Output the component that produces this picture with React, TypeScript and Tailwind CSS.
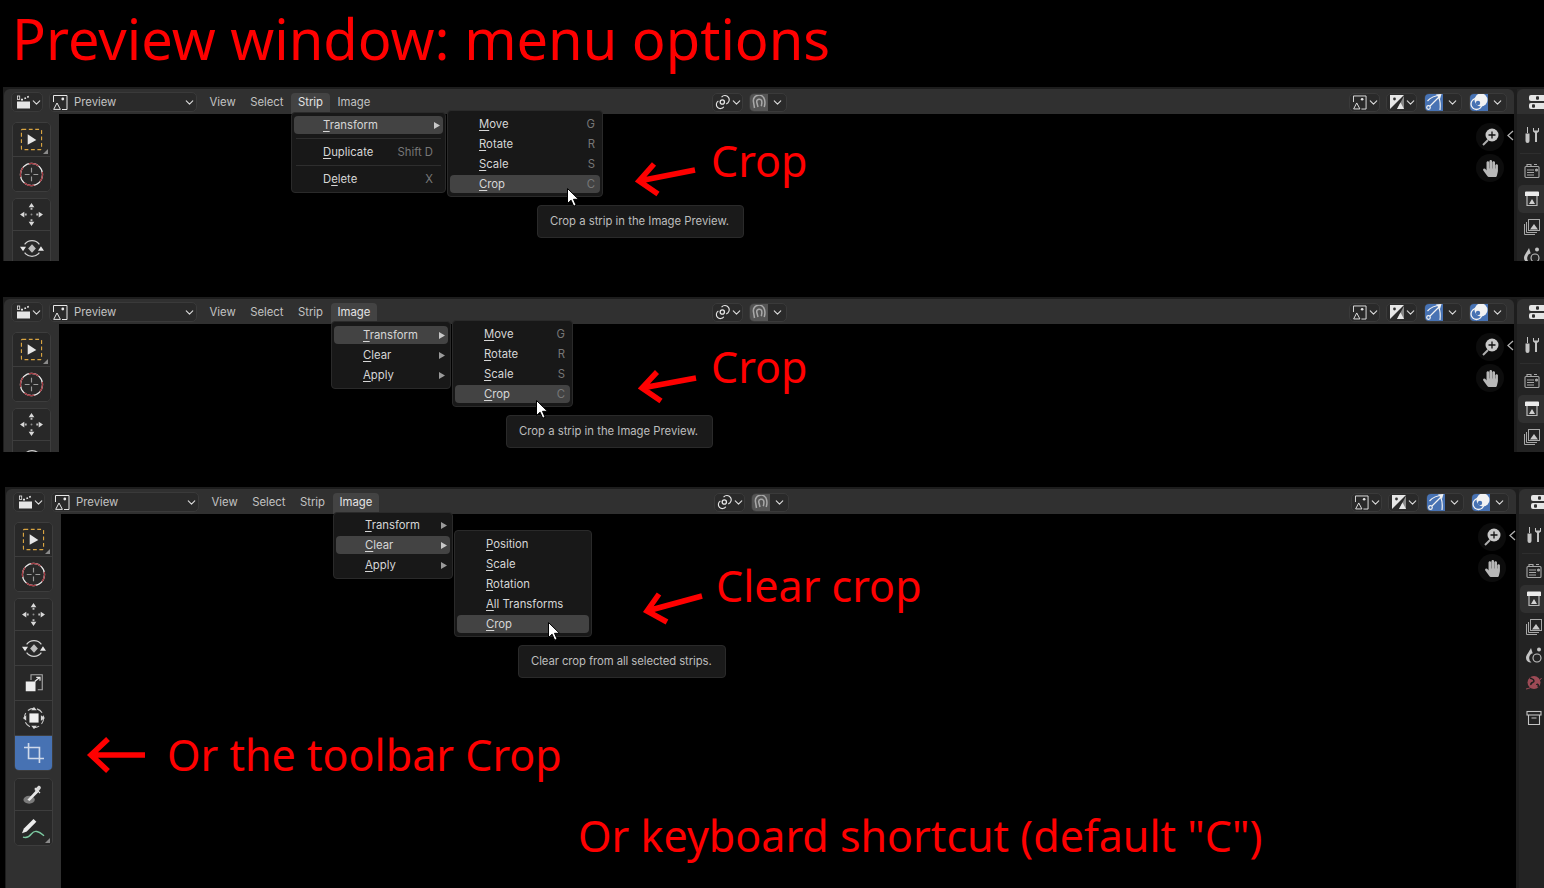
import React from "react";
import { FaHandPaper } from "react-icons/fa";
import { ChevronDown } from "lucide-react";

const W = "#e6e6e6";

function EditorIcon() {
  return (
    <svg width="14" height="14" viewBox="0 0 14 14">
      <rect x="0" y="6.500" width="13" height="7" fill={W} />
      <rect x="0.500" y="1" width="2.200" height="3.500" fill="none" stroke={W} strokeWidth="0.800" />
      <path d="M4 4.600h2M7.400 3.600l1.600-.5M10.200 2.200l1.600-.7" stroke={W} strokeWidth="1.600" fill="none" />
    </svg>
  );
}
function PreviewIcon() {
  return (
    <svg width="15" height="15" viewBox="0 0 15 15" fill="none">
      <path d="M.5 7V.5h13.500v14H9" stroke={W} strokeWidth="1" />
      <path d="M.7 14.400 4 8l3.400 6.400Z" stroke={W} strokeWidth="1" />
      <circle cx="9.800" cy="4" r="1.400" fill={W} />
    </svg>
  );
}
function DisplayIcon() {
  return (
    <svg width="14" height="14" viewBox="0 0 14 14">
      <path d="M0 0h14L0 14Z" fill={W} />
      <path d="M14 14H7L14 1Z" fill="#888" />
      <path d="M7 14 10.500 7.500 14 14Z" fill={W} />
      <circle cx="4.500" cy="4" r="1.400" fill="#333" />
    </svg>
  );
}
function PivotIcon() {
  return (
    <svg width="16" height="16" viewBox="0 0 16 16" fill="none" stroke={W} strokeWidth="1.200">
      <path d="M7 2.700a4.600 4.600 0 1 1 5 7.300" />
      <path d="M9.400 13a4.300 4.300 0 1 1-5.800-6" />
      <circle cx="7.800" cy="8" r="2.300" strokeWidth="1.400" />
    </svg>
  );
}
function MagnetIcon() {
  return (
    <svg width="15" height="15" viewBox="0 0 15 15" fill="none" stroke="#a8a8a8" strokeWidth="1.500">
      <path d="M2.500 13 1.400 6.500A5.600 5.600 0 0 1 12.600 5c.6 2.200.4 4.500-.4 7" />
      <path d="M6 12 4.700 7a2.600 2.600 0 0 1 5-1.200c.4 1.500.2 3.400-.4 5.500" />
    </svg>
  );
}
function GizmoIcon() {
  return (
    <svg width="18" height="18" viewBox="0 0 18 18" fill="none" stroke="#f2f2f2" strokeWidth="1.200">
      <circle cx="3.500" cy="14.500" r="1.800" />
      <path d="M5 13 14 4M2.500 8C6 4 10 2.500 16 2M15 17c.6-5 .2-9-1-12" />
      <path d="M11 1.500 16.500 1 15 6Z" fill="#f2f2f2" stroke="none" />
    </svg>
  );
}
function OverlayIcon() {
  return (
    <svg width="18" height="18" viewBox="0 0 18 18" fill="none">
      <circle cx="6.500" cy="11" r="5.500" stroke="#f2f2f2" strokeWidth="1.300" />
      <circle cx="11" cy="7" r="6.500" fill="#f2f2f2" />
      <circle cx="8" cy="10" r="2.200" fill="#4772b3" />
    </svg>
  );
}
function Caret() {
  return <ChevronDown size={13} strokeWidth={2} color="#dcdcdc" className="shrink-0 -mx-px" />;
}
function SplitButton({ children, active, magnet }: { children: React.ReactNode; active?: boolean; magnet?: boolean }) {
  return (
    <div className="flex h-[19px] w-[38px] shrink-0 rounded-[5px] border border-[#3a3a3a] bg-[#2a2a2a] overflow-hidden">
      <div className={active ? "w-[18px] bg-[#4772b3] flex items-center justify-center" : magnet ? "w-[18px] bg-[#545454] flex items-center justify-center" : "w-[18px] flex items-center justify-center"}>
        {children}
      </div>
      <div className="flex-1 flex items-center justify-center">
        <Caret />
      </div>
    </div>
  );
}
function DropButton({ children, pad = "pl-[3px]" }: { children: React.ReactNode; pad?: string }) {
  return (
    <div className={"flex h-[19px] w-[31px] shrink-0 items-center gap-[1px] rounded-[5px] border border-[#3a3a3a] bg-[#2a2a2a] " + pad}>
      {children}
      <Caret />
    </div>
  );
}
function Header({ active }: { active?: string }) {
  return (
    <div className="h-[25px] shrink-0 bg-[#303030] rounded-tl-[6px] rounded-tr-[6px] flex items-center pl-[7px] text-[11.300px] text-[#c2c2c2]">
      <div className="w-[701px] shrink-0 flex items-center h-full">
        <div className="flex h-[20px] w-[32px] mt-[1px] items-center pl-[5px] rounded-[5px] border border-[#3a3a3a] bg-[#2a2a2a]">
          <EditorIcon />
          <Caret />
        </div>
        <div className="ml-[6px] mt-[1px] flex h-[20px] w-[148px] items-center justify-between pl-[3px] pr-[1px] rounded-[5px] border border-[#3a3a3a] bg-[#2a2a2a]">
          <div className="flex items-center gap-[6px]">
            <PreviewIcon />
            <span>Preview</span>
          </div>
          <Caret />
        </div>
        <div className="ml-[6px] flex items-start gap-[1.500px] h-[21px] self-end">
          {["View", "Select", "Strip", "Image"].map((m) => (
            <div key={m} className={m === active ? "h-full flex items-center pb-[3px] px-[6.500px] rounded-t-[4px] bg-[#434343] text-[#e4e4e4]" : "h-full flex items-center pb-[3px] px-[6.500px]"}>
              {m}
            </div>
          ))}
        </div>
      </div>
      <div className="flex gap-[6px] shrink-0 mt-[1px]">
        <DropButton pad="pl-[2px]"><PivotIcon /></DropButton>
        <SplitButton magnet><MagnetIcon /></SplitButton>
      </div>
      <div className="ml-auto mr-[7px] mt-[1px] flex gap-[6px] items-center shrink-0">
        <DropButton><PreviewIcon /></DropButton>
        <DropButton><DisplayIcon /></DropButton>
        <div className="ml-[1px]"><SplitButton active><GizmoIcon /></SplitButton></div>
        <div className="ml-[1px]"><SplitButton active><OverlayIcon /></SplitButton></div>
      </div>
    </div>
  );
}

const Corner = () => (
  <svg className="absolute right-[2px] bottom-[2px]" width="5" height="5" viewBox="0 0 5 5">
    <path d="M5 0v5H0Z" fill="#8a8a8a" />
  </svg>
);

function SelectTool() {
  return (
    <svg width="23" height="23" viewBox="0 0 24 24" fill="none">
      <rect x="1.500" y="1.500" width="21" height="21" rx="1" stroke="#d9a441" strokeWidth="1.200" strokeDasharray="4 2.700" />
      <path d="M8 6.500 17 12.500 8 17.500Z" fill="#e6e6e6" />
    </svg>
  );
}
function CursorTool() {
  return (
    <svg width="25" height="25" viewBox="0 0 26 26" fill="none">
      <circle cx="13" cy="13" r="11.500" stroke="#ececec" strokeWidth="1.300" />
      <circle cx="13" cy="13" r="11.500" stroke="#a33a42" strokeWidth="1.300" strokeDasharray="11 7" strokeDashoffset="3" />
      <path d="M13 6v5M13 15v5M6 13h5M15 13h5" stroke="#9a9a9a" strokeWidth="1.200" />
    </svg>
  );
}
function MoveTool() {
  return (
    <svg width="23" height="23" viewBox="0 0 24 24" fill="#d8d8d8">
      <path d="M12 0 15 4.500H9ZM12 24l-3-4.500h6ZM0 12l4.500-3v6ZM24 12l-4.500 3V9Z" />
      <path d="M11 5h2v2h-2ZM11 17h2v2h-2ZM5 11h2v2H5ZM17 11h2v2h-2Z" fill="#bdbdbd" />
      <circle cx="12" cy="12" r="1" fill="#8a8a8a" />
    </svg>
  );
}
function RotateTool() {
  return (
    <svg width="24" height="23" viewBox="0 0 26 24" fill="none">
      <path d="M5 7.500a10 10 0 0 1 16 0M5 16.500a10 10 0 0 0 16 0" stroke="#cfcfcf" strokeWidth="1.300" />
      <path d="M0 10h6.500l-3.200 5ZM19.500 14.500h6.500L22.700 9.500Z" fill="#e6e6e6" />
      <path d="m13 7.500 4.200 4.500-4.200 4.500L8.800 12Z" fill="#bdbdbd" />
    </svg>
  );
}
function ScaleTool() {
  return (
    <svg width="18" height="18" viewBox="0 0 24 24" fill="none">
      <path d="M8 8V1h15v20h-6" stroke="#a8a8a8" strokeWidth="1.500" />
      <rect x="1" y="10" width="13" height="13" fill="#ececec" />
      <path d="m13 10 6-5M15 4.500h5V9" stroke="#e6e6e6" strokeWidth="1.600" />
    </svg>
  );
}
function TransformTool() {
  return (
    <svg width="22" height="22" viewBox="0 0 24 24" fill="none">
      <circle cx="12" cy="12" r="10.500" stroke="#c8c8c8" strokeWidth="1.200" strokeDasharray="7 3.500" />
      <rect x="7" y="7" width="10" height="10" fill="#f0f0f0" />
      <path d="M12 0l3 3.500H9ZM12 24l-3-3.500h6ZM0 12l3.500-3v6ZM24 12l-4.500 3V9Z" fill="#d8d8d8" />
    </svg>
  );
}
function CropTool() {
  return (
    <svg width="20" height="20" viewBox="0 0 22 22" fill="none" stroke="#cfd9ea" strokeWidth="1.800">
      <path d="M5 0v17h17M0 5h17v17" />
    </svg>
  );
}
function DropperTool() {
  return (
    <svg width="21" height="21" viewBox="0 0 24 24" fill="none">
      <ellipse cx="7" cy="18" rx="6.500" ry="4.500" fill="#7a7a7a" />
      <path d="M5 18 15 7l2.500 2.500L7.500 19.500Z" fill="#e6e6e6" />
      <path d="M13 6.500 17 2.500c1.500-1.500 4.500 1 3 3l-3.500 4.500Z" fill="#d8d8d8" />
      <path d="m13.500 4.500 6 6" stroke="#e6e6e6" strokeWidth="1.400" />
    </svg>
  );
}
function PencilTool() {
  return (
    <svg width="25" height="23" viewBox="0 0 26 24" fill="none">
      <path d="M1 17 3 12 13 2l3 3L6 15Z" fill="#ececec" />
      <path d="M2 21c3 1 6 .5 9-3.500s7-3 13 2" stroke="#7bc8a0" strokeWidth="1.400" />
    </svg>
  );
}
function ToolButton({ children, active, corner, last, h = "h-[35px]" }: { children: React.ReactNode; active?: boolean; corner?: boolean; last?: boolean; h?: string }) {
  return (
    <div className={(active ? "bg-[#4772b3] " : "bg-[#282828] ") + (last ? "" : "border-b border-[#3d3d3d] ") + "relative flex items-center justify-center " + h}>
      {children}
      {corner && <Corner />}
    </div>
  );
}
const groupCls = "w-[39px] shrink-0 rounded-[5px] border border-[#3d3d3d] overflow-hidden";
function Toolbar() {
  return (
    <div className="w-[55px] shrink-0 bg-[#303030] pl-[8px] pt-[8px] flex flex-col overflow-hidden">
      <div className={groupCls}>
        <ToolButton corner h="h-[34px]"><SelectTool /></ToolButton>
        <ToolButton last h="h-[34px]"><CursorTool /></ToolButton>
      </div>
      <div className={"mt-[6px] " + groupCls}>
        <ToolButton h="h-[32px]"><MoveTool /></ToolButton>
        <ToolButton><RotateTool /></ToolButton>
        <ToolButton><ScaleTool /></ToolButton>
        <ToolButton><TransformTool /></ToolButton>
        <ToolButton active last h="h-[34px]"><CropTool /></ToolButton>
      </div>
      <div className={"mt-[7px] " + groupCls}>
        <ToolButton h="h-[32px]"><DropperTool /></ToolButton>
        <ToolButton corner last h="h-[34px]"><PencilTool /></ToolButton>
      </div>
    </div>
  );
}

function Gizmos() {
  return (
    <>
      <div className="absolute right-0 top-[11px] w-[7px] h-[20px] flex items-center justify-center">
        <svg width="7" height="11" viewBox="0 0 7 11" fill="none" stroke="#b0b0b0" strokeWidth="1.300"><path d="M6 1 1 5.500 6 10" /></svg>
      </div>
      <div className="absolute right-[10px] top-[9px] flex flex-col gap-[3px] items-center">
        <div className="w-[28px] h-[28px] rounded-full bg-[#0c0c0c] flex items-center justify-center">
          <svg width="18" height="18" viewBox="0 0 18 18">
            <path d="M2 17 7 12" stroke="#b0b0b0" strokeWidth="2" />
            <circle cx="11" cy="7" r="6.500" fill="#c8c8c8" />
            <path d="M11 3.500v7M7.500 7h7" stroke="#111" strokeWidth="1.300" />
          </svg>
        </div>
        <div className="w-[28px] h-[28px] rounded-full bg-[#0c0c0c] flex items-center justify-center">
          <FaHandPaper size={17} color="#b8b8b8" />
        </div>
      </div>
    </>
  );
}

const TabIcons = {
  tool: (
    <svg width="16" height="16" viewBox="0 0 16 16" fill="#c4c4c4">
      <path d="M3 0h1v6H3ZM1.500 6.500h4V14a2 2 0 0 1-4 0Z" />
      <path d="M9 1v3.500l2 1.500v9h2V6l2-1.500V1l-1 0v2.500h-4V1Z" />
    </svg>
  ),
  render: (
    <svg width="16" height="16" viewBox="0 0 16 16" fill="none" stroke="#a8a8a8" strokeWidth="1.100">
      <rect x="1" y="3.500" width="14" height="11" rx="1" />
      <path d="M3 3V1.500h4V3M10 1.500h3" />
      <path d="M3 7h7M3 9.500h7M3 12h7" />
      <circle cx="12.500" cy="7" r="1" fill="#a8a8a8" />
    </svg>
  ),
  output: (
    <svg width="16" height="16" viewBox="0 0 16 16">
      <path d="M1 1.500a1 1 0 0 1 1-1h12a1 1 0 0 1 1 1V5H1Z" fill="#ececec" />
      <path d="M3 5v9.500h10V5" fill="none" stroke="#b8b8b8" strokeWidth="1.200" />
      <path d="M5 13 8 8l3 5Z" fill="#d0d0d0" />
    </svg>
  ),
  view: (
    <svg width="16" height="16" viewBox="0 0 16 16" fill="none" stroke="#a8a8a8" strokeWidth="1">
      <rect x="4.500" y="0.500" width="11" height="11" />
      <path d="M2.500 3v10.500H13M.5 5v10.500H11" />
      <path d="M6 10.500 10 5l4 5.500Z" fill="#c8c8c8" stroke="none" />
    </svg>
  ),
  scene: (
    <svg width="16" height="16" viewBox="0 0 16 16">
      <path d="M5 1C3 5 0 8 0 11a4.500 4.500 0 0 0 5.500 4.300 5 5 0 0 1 1.200-9Z" fill="#c4c4c4" />
      <circle cx="13" cy="2.500" r="2" fill="#c4c4c4" />
      <circle cx="11" cy="11" r="4" fill="none" stroke="#c4c4c4" strokeWidth="1.100" />
    </svg>
  ),
  world: (
    <svg width="16" height="16" viewBox="0 0 16 16">
      <circle cx="8" cy="7.500" r="6.500" fill="#9c4a55" />
      <path d="M4 3c2 1 4 1 4 3S4 7 5 10M10 9c2 0 3 1 2 3" stroke="#1f1f1f" strokeWidth="1.500" fill="none" />
      <path d="M0 14c6-1 11-5 15.500-11" stroke="#9c4a55" fill="none" strokeWidth="1" />
    </svg>
  ),
  collection: (
    <svg width="16" height="16" viewBox="0 0 16 16" fill="none" stroke="#c4c4c4" strokeWidth="1.100">
      <rect x="1" y="1.500" width="14" height="3.500" />
      <path d="M2.500 5v9.500h11V5M5.500 8h5" />
    </svg>
  ),
};

function Tab({ icon, active }: { icon: React.ReactNode; active?: boolean }) {
  return (
    <div className={active ? "h-[28px] pl-[6px] flex items-center rounded-l-[5px] bg-[#303030] ml-[1px]" : "h-[28px] pl-[7px] flex items-center"}>
      {icon}
    </div>
  );
}
function Sidebar() {
  return (
    <div className="ml-[3px] flex-1 flex flex-col bg-[#232323] min-w-0">
      <div className="h-[25px] bg-[#303030] rounded-tl-[6px] pl-[12px] flex items-center shrink-0">
        <svg className="shrink-0" width="20" height="16" viewBox="0 0 20 16" fill="#e6e6e6">
          <rect x="0" y="1" width="20" height="6" rx="2" />
          <rect x="0" y="9" width="20" height="6" rx="2" />
          <rect x="7" y="2.200" width="3" height="3.600" rx="1" fill="#303030" />
          <rect x="3" y="10.200" width="3" height="3.600" rx="1" fill="#303030" />
        </svg>
      </div>
      <div className="pt-[7px]">
        <Tab icon={TabIcons.tool} />
        <div className="my-[4px] mx-[3px] h-px bg-[#2e2e2e] -mb-px" />
        <div className="h-[4px]" />
        <Tab icon={TabIcons.render} />
        <Tab icon={TabIcons.output} active />
        <Tab icon={TabIcons.view} />
        <Tab icon={TabIcons.scene} />
        <Tab icon={TabIcons.world} />
        <div className="h-[7px]" />
        <Tab icon={TabIcons.collection} />
      </div>
    </div>
  );
}

function Panel({ className, active, children }: { className: string; active: string; children?: React.ReactNode }) {
  return (
    <div className={"relative flex bg-[#1d1d1d] pt-[2px] pl-[1px] overflow-hidden " + className}>
      <div className="w-[1510px] shrink-0 flex flex-col">
        <Header active={active} />
        <div className="flex flex-1 min-h-0">
          <Toolbar />
          <div className="relative flex-1 bg-black">
            <Gizmos />
          </div>
        </div>
      </div>
      <Sidebar />
      {children}
    </div>
  );
}

function Mn({ t, i = 0 }: { t: string; i?: number }) {
  return (
    <span>
      {t.slice(0, i)}
      <span className="underline decoration-1 underline-offset-[2px]">{t[i]}</span>
      {t.slice(i + 1)}
    </span>
  );
}
function Row({ t, i, hl, sc, sub, scPad = "pr-[5px]", indent = "pl-[29px]" }: { t: string; i?: number; hl?: boolean; sc?: string; sub?: boolean; scPad?: string; indent?: string }) {
  return (
    <div className={(hl ? "bg-[#434343] rounded-[4px] " : "") + "h-[18px] my-[1px] shrink-0 flex items-center justify-between text-[11.300px] text-[#d6d6d6] " + indent}>
      <Mn t={t} i={i} />
      {sc && <span className={"text-[#777777] " + scPad}>{sc}</span>}
      {sub && (
        <svg className="mr-[3px]" width="6" height="7" viewBox="0 0 6 7"><path d="M0 0 6 3.500 0 7Z" fill={hl ? "#c8c8c8" : "#9a9a9a"} /></svg>
      )}
    </div>
  );
}
const Sep = () => <div className="h-[7px] shrink-0 flex items-center px-[2px]"><div className="h-px w-full bg-[#2e2e2e]" /></div>;

function Menu({ className, children }: { className: string; children: React.ReactNode }) {
  return (
    <div className={"absolute flex flex-col rounded-[4px] border border-[#2a2a2a] bg-[#181818] px-[2px] " + className}>
      {children}
    </div>
  );
}
function Tooltip({ className, children }: { className: string; children: React.ReactNode }) {
  return (
    <div className={"absolute h-[33px] flex items-center pl-[12px] rounded-[4px] border border-[#2a2a2a] bg-[#1a1a1a] text-[11.300px] text-[#bdbdbd] whitespace-nowrap " + className}>
      {children}
    </div>
  );
}
function Cursor({ className }: { className: string }) {
  return (
    <svg className={"absolute " + className} width="13" height="19" viewBox="0 0 13 19">
      <path d="M.5.5v15l3.600-3.300 2.600 6 2.400-1-2.600-5.900h5Z" fill="#fff" stroke="#000" strokeWidth="1" />
    </svg>
  );
}
function RedLabel({ className, children }: { className: string; children: React.ReactNode }) {
  return (
    <div className={"absolute whitespace-nowrap leading-none text-[43px] text-[#ff0000] font-['Noto_Sans',sans-serif] " + className}>
      {children}
    </div>
  );
}
function RedArrow({ className, w, h, d }: { className: string; w: number; h: number; d: string }) {
  return (
    <svg className={"absolute " + className} width={w} height={h} viewBox={`0 0 ${w} ${h}`} fill="none" stroke="#ff0000" strokeWidth="5.500">
      <path d={d} />
    </svg>
  );
}

export default function App() {
  return (
    <div className="w-[1544px] h-[888px] bg-black overflow-hidden font-['Inter',sans-serif]">
      <h1 className="h-[87px] pl-[12px] pt-[5px] text-[56px] leading-[66px] text-[#ff0000] font-['Noto_Sans',sans-serif] font-normal whitespace-nowrap">
        Preview window: menu options
      </h1>

      <Panel className="ml-[3px] h-[174px]" active="Strip">
        <Menu className="left-[288px] top-[25px] w-[155px] pt-[2px]">
          <Row t="Transform" hl sub />
          <Sep />
          <Row t="Duplicate" sc="Shift D" scPad="pr-[10px]" />
          <Sep />
          <Row t="Delete" i={1} sc="X" scPad="pr-[10px]" />
          <div className="h-[3px]" />
        </Menu>
        <Menu className="left-[444px] top-[23px] w-[156px] pt-[3px] pb-[2px]">
          <Row t="Move" sc="G" />
          <Row t="Rotate" sc="R" />
          <Row t="Scale" sc="S" />
          <Row t="Crop" sc="C" hl />
        </Menu>
        <Tooltip className="left-[534px] top-[118px] w-[207px]">Crop a strip in the Image Preview.</Tooltip>
        <Cursor className="left-[564px] top-[101px]" />
        <RedArrow className="left-[627px] top-[71px]" w={70} h={42} d="M65 12 9 23M24 6 9 23 28 36" />
        <RedLabel className="left-[708px] top-[52px]">Crop</RedLabel>
      </Panel>

      <Panel className="ml-[3px] mt-[36px] h-[155px]" active="Image">
        <Menu className="left-[328px] top-[24px] w-[120px] pt-[3px] pb-[3px]">
          <Row t="Transform" hl sub />
          <Row t="Clear" sub />
          <Row t="Apply" sub />
        </Menu>
        <Menu className="left-[449px] top-[23px] w-[121px] pt-[3px] pb-[2px]">
          <Row t="Move" sc="G" />
          <Row t="Rotate" sc="R" />
          <Row t="Scale" sc="S" />
          <Row t="Crop" sc="C" hl />
        </Menu>
        <Tooltip className="left-[503px] top-[118px] w-[207px]">Crop a strip in the Image Preview.</Tooltip>
        <Cursor className="left-[533px] top-[103px]" />
        <RedArrow className="left-[630px] top-[66px]" w={70} h={42} d="M63 15 9 25M24 9 9 25 28 38" />
        <RedLabel className="left-[708px] top-[48px]">Crop</RedLabel>
      </Panel>

      <Panel className="ml-[5px] mt-[35px] h-[401px]" active="Image">
        <Menu className="left-[328px] top-[25px] w-[120px] pt-[2px] pb-[3px]">
          <Row t="Transform" sub />
          <Row t="Clear" hl sub />
          <Row t="Apply" sub />
        </Menu>
        <Menu className="left-[449px] top-[43px] w-[138px] pt-[3px] pb-[2px]">
          <Row t="Position" />
          <Row t="Scale" />
          <Row t="Rotation" />
          <Row t="All Transforms" />
          <Row t="Crop" hl />
        </Menu>
        <Tooltip className="left-[513px] top-[158px] w-[208px] tracking-[-0.080px]">Clear crop from all selected strips.</Tooltip>
        <Cursor className="left-[543px] top-[135px]" />
        <RedArrow className="left-[633px] top-[101px]" w={70} h={42} d="M64 8 9 23M21 6 9 23 29 34" />
        <RedLabel className="left-[711px] top-[77px]">Clear crop</RedLabel>
        <RedArrow className="left-[75px] top-[243px]" w={70} h={50} d="M65 25H10M28 9 11 25 28 41" />
        <RedLabel className="left-[162px] top-[246px]">Or the toolbar Crop</RedLabel>
        <RedLabel className="left-[573px] top-[327px]">Or keyboard shortcut (default "C")</RedLabel>
      </Panel>
    </div>
  );
}
